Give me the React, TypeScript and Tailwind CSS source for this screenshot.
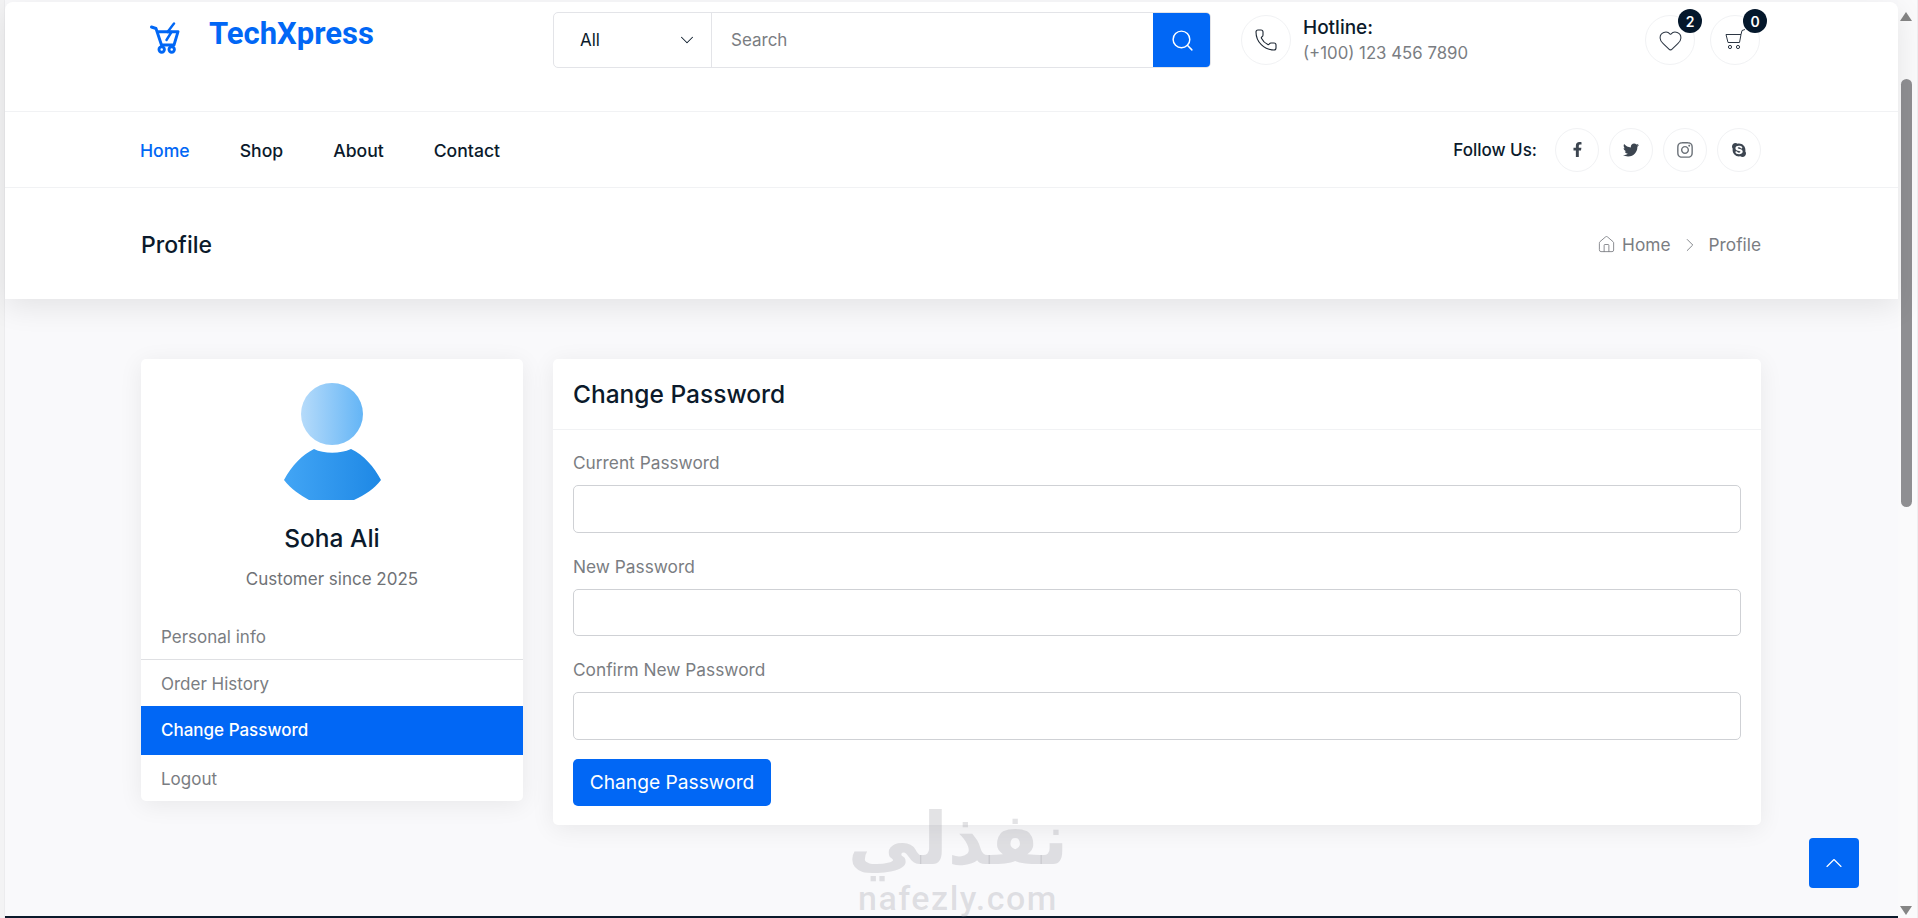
import React from 'react';
import { Phone, Heart, Search, ChevronDown, ChevronRight, ChevronUp, House } from 'lucide-react';
import { FaFacebookF, FaTwitter, FaInstagram, FaSkype } from 'react-icons/fa';

const LogoCart = () => (
  <svg width="30" height="32" viewBox="0 0 30 32" fill="none" stroke="#0167f5" strokeWidth="2.9" strokeLinecap="round" strokeLinejoin="round">
    <path d="M1.5 5 L6 6.5 L11.5 23 H24 L28 9.7 H7" />
    <path d="M24 1.5 L17.5 10 H21.5 L16.5 18" strokeWidth="2.4" />
    <circle cx="11.7" cy="27.5" r="2.7" />
    <circle cx="21.7" cy="27.5" r="2.7" />
  </svg>
);

const ThinCart = () => (
  <svg width="24" height="24" viewBox="0 0 24 24" fill="none" stroke="#2d3744" strokeWidth="1">
    <path d="M3 6.5 H18 L16.5 14.5 H5 Z" />
    <path d="M18 6.5 L19 2.5 L22 1.5" />
    <circle cx="7" cy="19" r="1.6" />
    <circle cx="15" cy="19" r="1.6" />
  </svg>
);

const Avatar = () => (
  <svg width="120" height="120" viewBox="0 0 120 120" className="mx-auto">
    <defs>
      <linearGradient id="head" x1="0" y1="0" x2="1" y2="0">
        <stop offset="0" stopColor="#b6dbfa" />
        <stop offset="1" stopColor="#64b5f6" />
      </linearGradient>
      <linearGradient id="body" x1="0" y1="0" x2="1" y2="0">
        <stop offset="0" stopColor="#42a5f5" />
        <stop offset="1" stopColor="#1e88e5" />
      </linearGradient>
    </defs>
    <circle cx="60" cy="31" r="31" fill="url(#head)" />
    <path d="M12 97 C20 82 30 72 42 66 C52 71 68 71 79 66 C92 72 102 84 109 97 C102 106 93 112 82 117 H37 C28 112 19 106 12 97 Z" fill="url(#body)" />
  </svg>
);

const Circle = ({ size, children }: { size: string; children: React.ReactNode }) => (
  <div className={`${size} rounded-full border border-[#f1f2f4] flex items-center justify-center text-[#3c4550]`}>{children}</div>
);

const menu = ['Personal info', 'Order History', 'Change Password', 'Logout'];
const fields = ['Current Password', 'New Password', 'Confirm New Password'];

export default function App() {
  return (
    <div className="relative flex w-[1918px] h-[918px] overflow-hidden bg-[#fafafb] text-[17px] text-[#6f7276] font-['Inter',sans-serif]">
      {/* window edge */}
      <div className="w-[5px] shrink-0 bg-[#f3f3f4] border-r border-[#ececee]"></div>

      <div className="flex-1 flex flex-col pt-[2px] bg-[#f9f9fb] min-w-0">
        <header className="bg-white rounded-tl-[8px] rounded-tr-[8px] shadow-[0_8px_30px_rgba(0,0,0,0.09)] relative z-10">
          {/* top row */}
          <div className="h-[110px] pl-[136px] pr-[137px] pt-[10px] border-b border-[#f1f2f4] flex items-start">
            <div className="w-[412px] flex items-start">
              <div className="ml-[9px] mt-[10px]"><LogoCart /></div>
              <span className="ml-[29px] mt-[3px] font-['Roboto',sans-serif] font-bold text-[31px] leading-[38px] text-[#0167f5]">TechXpress</span>
            </div>
            <div className="w-[658px] h-[56px] flex rounded-[5px] border border-[#e3e4e8] overflow-hidden">
              <div className="w-[158px] border-r border-[#e3e4e8] flex items-center justify-between pl-[26px] pr-[13px] text-[#0b1a2b]">
                <span className="pt-[2px]">All</span>
                <ChevronDown size={22} strokeWidth={1.1} />
              </div>
              <input placeholder="Search" className="flex-1 px-[19px] pt-[2px] outline-none placeholder:text-[#7a7d82] bg-white" />
              <div className="w-[58px] -my-px -mr-px bg-[#0167f5] flex items-center justify-center text-white">
                <Search size={25} strokeWidth={1.4} />
              </div>
            </div>
            <div className="ml-[30px] mt-[3px] flex items-center w-[400px]">
              <Circle size="w-[50px] h-[50px]"><Phone size={24} strokeWidth={1.1} className="text-[#1d2733]" /></Circle>
              <div className="ml-[12px]">
                <div className="text-[19px] leading-[24px] font-medium text-[#0b1a2b]">Hotline:</div>
                <div className="text-[16.8px] leading-[24px] mt-px text-[#7a7d82]">(+100) 123 456 7890</div>
              </div>
            </div>
            <div className="ml-auto mt-[3px] mr-[1px] flex gap-[15px]">
              <div className="relative">
                <Circle size="w-[50px] h-[50px]"><Heart size={25} strokeWidth={1} className="text-[#2d3744]" /></Circle>
                <span className="absolute -top-[6px] -right-[7px] w-[24px] h-[24px] rounded-full bg-[#04172b] text-white text-[14px] font-semibold flex items-center justify-center">2</span>
              </div>
              <div className="relative">
                <Circle size="w-[50px] h-[50px]"><ThinCart /></Circle>
                <span className="absolute -top-[6px] -right-[7px] w-[24px] h-[24px] rounded-full bg-[#04172b] text-white text-[14px] font-semibold flex items-center justify-center">0</span>
              </div>
            </div>
          </div>

          {/* nav */}
          <div className="h-[76px] pl-[135px] pr-[137px] border-b border-[#f1f2f4] flex items-center justify-between">
            <nav className="flex gap-[50px] pt-[3px] font-medium text-[#0b1a2b] text-[17.6px]">
              <a className="text-[#0167f5]">Home</a>
              <a>Shop</a>
              <a>About</a>
              <a>Contact</a>
            </nav>
            <div className="flex items-center">
              <span className="pt-[3px] font-medium text-[#0b1a2b] mr-[18px]">Follow Us:</span>
              <div className="flex gap-[10px]">
                <Circle size="w-[44px] h-[44px]"><FaFacebookF size={15} /></Circle>
                <Circle size="w-[44px] h-[44px]"><FaTwitter size={16} /></Circle>
                <Circle size="w-[44px] h-[44px]"><FaInstagram size={18} className="text-[#6b7178]" /></Circle>
                <Circle size="w-[44px] h-[44px]"><FaSkype size={16} /></Circle>
              </div>
            </div>
          </div>

          {/* page title */}
          <div className="h-[111px] pl-[136px] pr-[137px] flex items-center justify-between">
            <h1 className="pt-[4px] text-[23px] font-medium text-[#0b1a2b]">Profile</h1>
            <div className="flex items-center pt-[2px] text-[17.3px] text-[#7a7d82]">
              <House size={19} strokeWidth={1.1} />
              <span className="ml-[6px]">Home</span>
              <ChevronRight size={22} strokeWidth={1} className="mx-[8px]" />
              <span>Profile</span>
            </div>
          </div>
        </header>

        {/* content */}
        <main className="pl-[136px] pr-[137px] pt-[60px] flex items-start gap-[30px]">
          <aside className="w-[382px] shrink-0 bg-white rounded-[5px] shadow-[0_4px_24px_rgba(0,0,0,0.07)] pt-[24px] overflow-hidden">
            <Avatar />
            <div className="mt-[19px] text-center text-[24.5px] leading-[32px] font-medium text-[#0b1a2b]">Soha Ali</div>
            <div className="mt-[13px] text-center leading-[24px]">Customer since 2025</div>
            <ul className="mt-[23px]">
              {menu.map((item) => (
                <li
                  key={item}
                  className={
                    item === 'Change Password'
                      ? 'h-[49px] px-[20px] pt-[1px] flex items-center bg-[#0167f5] text-white font-medium'
                      : item === 'Personal info'
                        ? 'h-[46px] px-[20px] pt-[2px] flex items-center border-b border-[#dfe0e3] text-[#7a7d82]'
                        : 'h-[46px] px-[20px] pt-[3px] flex items-center text-[#7a7d82]'
                  }
                >
                  {item}
                </li>
              ))}
            </ul>
          </aside>

          <section className="flex-1 bg-white rounded-[5px] shadow-[0_4px_24px_rgba(0,0,0,0.07)]">
            <h2 className="h-[71px] px-[20px] flex items-center border-b border-[#f1f2f4] text-[24.5px] font-medium text-[#0b1a2b]">Change Password</h2>
            <form className="px-[20px] pb-[19px] -mt-px">
              {fields.map((f) => (
                <div key={f} className="pt-[22px]">
                  <label className="block leading-[24px] mb-[10px] text-[17.3px] text-[#7a7d82]">{f}</label>
                  <input type="password" className="block w-full h-[47.5px] rounded-[5px] border border-[#cfd1d5] outline-none bg-white" />
                </div>
              ))}
              <button type="button" className="mt-[19px] w-[198px] h-[47px] rounded-[5px] bg-[#0167f5] text-white text-[19.2px] font-normal">Change Password</button>
            </form>
          </section>
        </main>

        <div className="mt-auto h-[2px] bg-[#0b1a2b]"></div>
      </div>

      {/* browser scrollbar */}
      <div className="w-[20px] shrink-0 flex flex-col items-center bg-[#fafafb] pr-[3px] border-r border-[#eeeef0]">
        <div className="mt-[12px] w-0 h-0 border-x-[6.5px] border-x-transparent border-b-[9px] border-b-[#858585]"></div>
        <div className="mt-[58px] w-[11px] h-[428px] rounded-full bg-[#8f8f92]"></div>
        <div className="mt-auto mb-[3px] w-0 h-0 border-x-[6.5px] border-x-transparent border-t-[9px] border-t-[#858585]"></div>
      </div>

      {/* back to top */}
      <div className="absolute left-[1809px] top-[838px] w-[50px] h-[50px] rounded-[4px] bg-[#0167f5] text-white flex items-center justify-center">
        <ChevronUp size={28} strokeWidth={1} />
      </div>

      {/* watermark */}
      <div className="absolute left-[852px] top-[795px] w-[212px] flex flex-col items-center text-[#8f8f99]/25 pointer-events-none font-bold">
        <div dir="rtl" className="text-[72px] leading-[88px] font-['DejaVu_Sans',sans-serif]">نفذلي</div>
        <div className="text-[34px] leading-[30px] tracking-[1.5px] font-['Roboto',sans-serif] font-medium">nafezly.com</div>
      </div>
    </div>
  );
}
